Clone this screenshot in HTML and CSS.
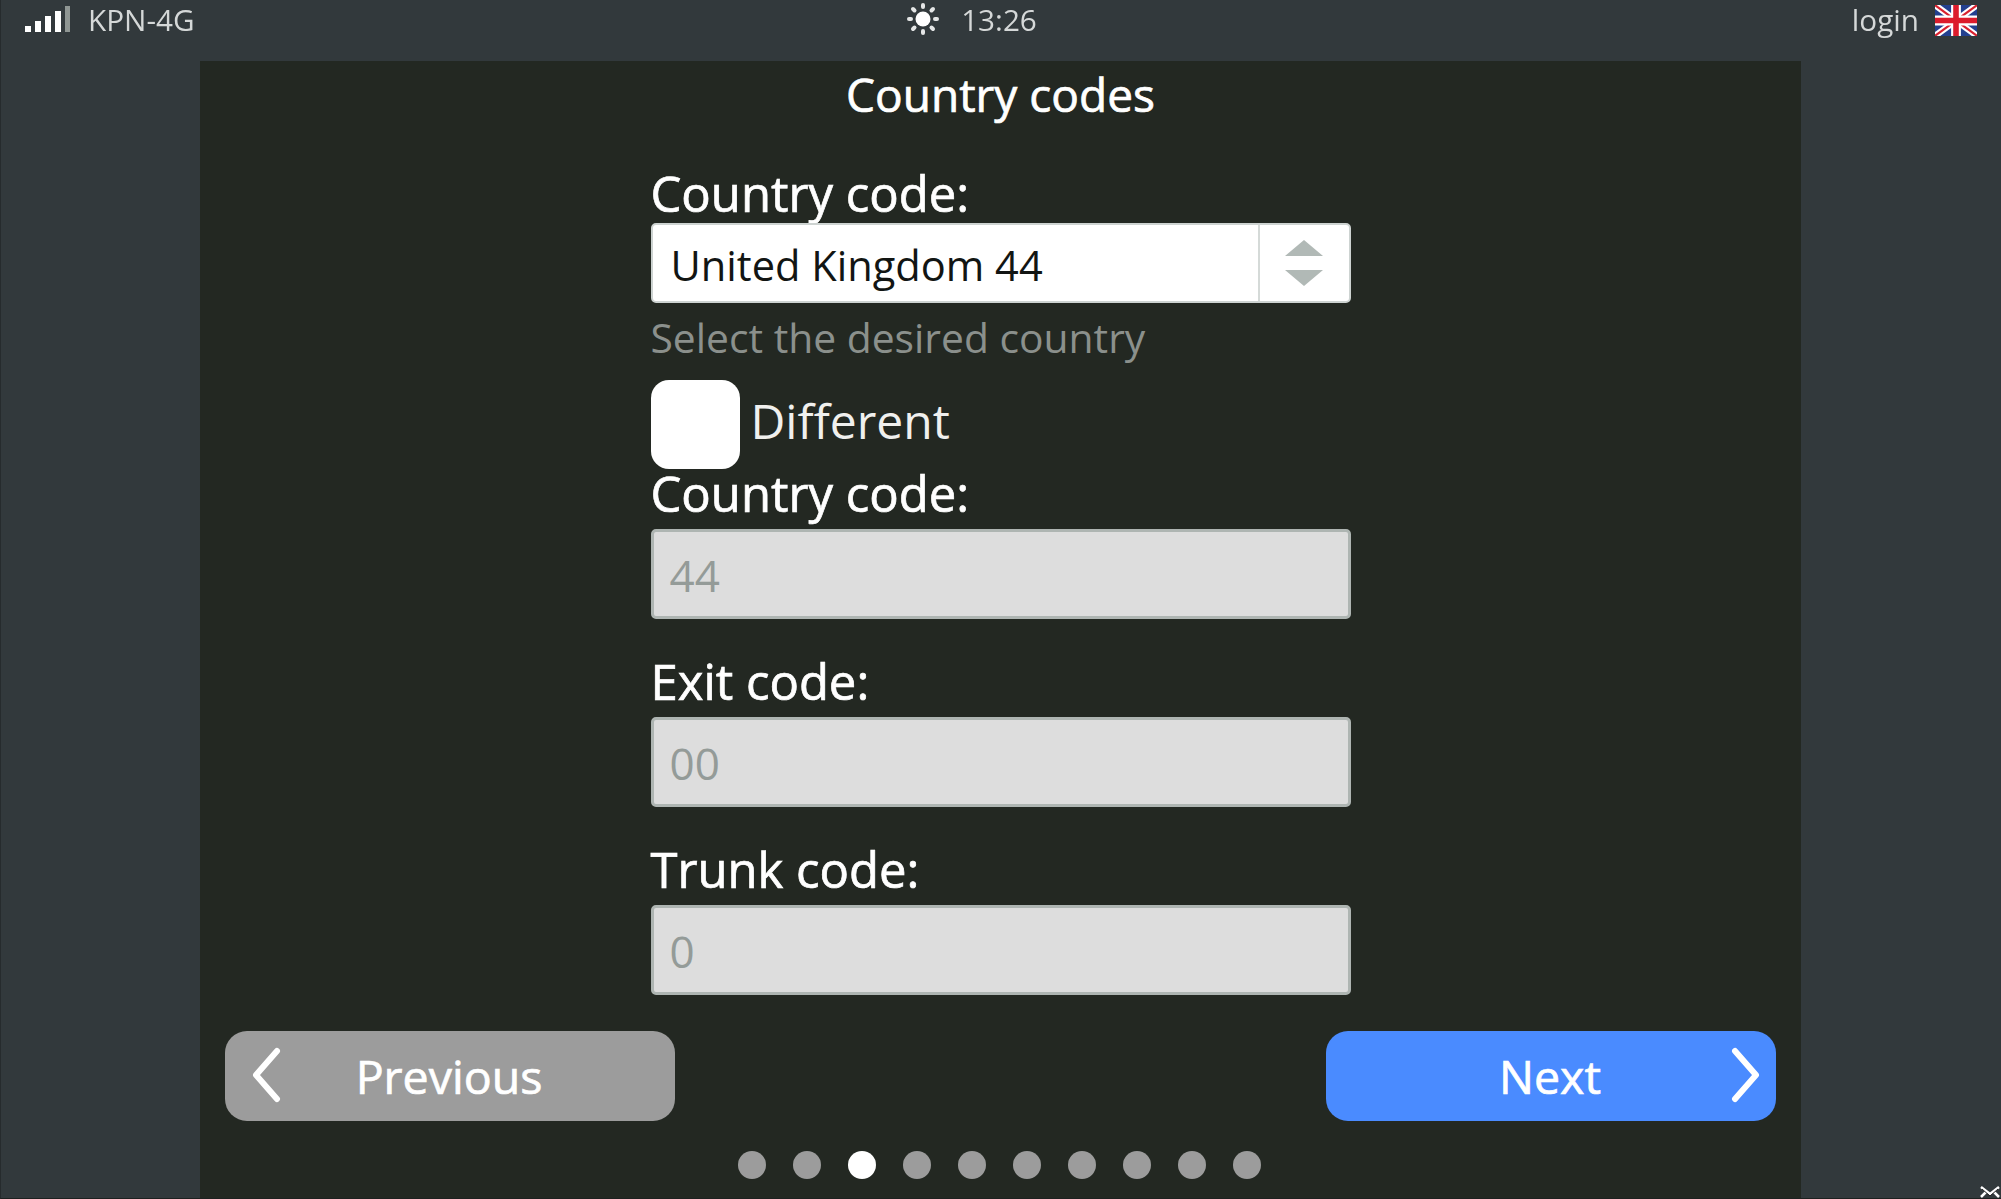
FILE: index.html
```html
<!DOCTYPE html>
<html lang="en">
<head>
<meta charset="utf-8">
<title>Country codes</title>
<link rel="stylesheet" href="styles.css">
</head>
<body>
<div class="screen">
  <header class="statusbar">
    <div class="status-left">
      <svg class="signal" width="46" height="26" viewBox="0 0 46 26"><rect x="0" y="20" width="6" height="6" fill="#fff"/><rect x="10" y="15" width="6" height="11" fill="#fff"/><rect x="20" y="10" width="6" height="16" fill="#fff"/><rect x="30" y="5" width="6" height="21" fill="#fff"/><rect x="40" y="0" width="5" height="26" fill="#8f9693"/></svg>
      <span>KPN-4G</span>
    </div>
    <div class="status-center">
      <svg class="sun" width="32" height="32" viewBox="0 0 32 32"><circle cx="16" cy="16" r="7.5" fill="#fff"/><g stroke="#e4e6e6" stroke-width="4" stroke-linecap="round"><path d="M16 2v2"/><path d="M16 28v2"/><path d="M2 16h2"/><path d="M28 16h2"/><path d="M6 6l1.5 1.5"/><path d="M24.500 24.500L26 26"/><path d="M6 26l1.500-1.500"/><path d="M24.500 7.500L26 6"/></g></svg>
      <span>13:26</span>
    </div>
    <div class="status-right">
      <span>login</span>
      <svg class="flag" width="42" height="31" viewBox="0 0 60 44"><rect width="60" height="44" rx="3" fill="#23408f"/><path d="M0 0L60 44M60 0L0 44" stroke="#fff" stroke-width="9"/><path d="M0 0L60 44M60 0L0 44" stroke="#d8212f" stroke-width="3"/><path d="M30 0V44M0 22H60" stroke="#fff" stroke-width="14"/><path d="M30 0V44M0 22H60" stroke="#dc1c2c" stroke-width="8"/></svg>
    </div>
  </header>

  <main class="panel">
    <h1 class="title">Country codes</h1>
    <form class="form">
      <label class="label label-first">Country code:</label>
      <div class="select">
        <span class="select-value">United Kingdom 44</span>
        <span class="select-arrows">
          <svg width="38" height="46" viewBox="0 0 38 46"><path d="M19 0L38 16H0Z" fill="#b1b9b6"/><path d="M0 30H38L19 46Z" fill="#b1b9b6"/></svg>
        </span>
      </div>
      <p class="hint">Select the desired country</p>
      <div class="check-row">
        <span class="checkbox"></span>
        <span class="check-label">Different</span>
      </div>
      <label class="label label-tight">Country code:</label>
      <div class="input">44</div>
      <label class="label">Exit code:</label>
      <div class="input">00</div>
      <label class="label">Trunk code:</label>
      <div class="input">0</div>
    </form>
    <div class="nav">
      <button class="btn btn-prev" type="button">
        <svg class="chev chev-left" width="30" height="56" viewBox="0 0 30 56"><path d="M26 4L5 28L26 52" fill="none" stroke="#fff" stroke-width="6" stroke-linecap="round" stroke-linejoin="round"/></svg>
        Previous
      </button>
      <button class="btn btn-next" type="button">
        Next
        <svg class="chev chev-right" width="30" height="56" viewBox="0 0 30 56"><path d="M4 4L25 28L4 52" fill="none" stroke="#fff" stroke-width="6" stroke-linecap="round" stroke-linejoin="round"/></svg>
      </button>
    </div>
    <div class="dots">
      <span class="dot"></span><span class="dot"></span><span class="dot dot-on"></span><span class="dot"></span><span class="dot"></span><span class="dot"></span><span class="dot"></span><span class="dot"></span><span class="dot"></span><span class="dot"></span>
    </div>
  </main>

  <svg class="cursor" width="21" height="12" viewBox="0 0 21 12"><path d="M1 1L10 8L19 1M1 11L6 6M19 11L14 6" fill="none" stroke="#fff" stroke-width="2.500"/><path d="M2 3L10 10L18 3" fill="none" stroke="#222" stroke-width="1"/></svg>
</div>
</body>
</html>
```
FILE: styles.css
```css
* { box-sizing: border-box; }
html, body { margin: 0; padding: 0; }
body {
  width: 2001px;
  height: 1199px;
  overflow: hidden;
  background: #32393c;
  font-family: "Open Sans", "Noto Sans", sans-serif;
  color: #fff;
}
.screen {
  position: relative;
  width: 2001px;
  height: 1199px;
  display: flex;
  flex-direction: column;
  background: #32393c;
  border-left: 1px solid #262b2d;
  border-bottom: 1px solid #1d2120;
  filter: blur(0.5px);
}
.statusbar {
  height: 61px;
  flex: none;
  display: grid;
  grid-template-columns: 1fr auto 1fr;
  align-items: start;
  padding: 4px 24px 0 24px;
  font-size: 29.7px;
  line-height: 32px;
  color: #d5d8d8;
}
.status-left { display: flex; align-items: flex-end; gap: 17px; height: 32px; }
.signal { margin-bottom: 4px; }
.status-center { display: flex; align-items: center; gap: 22px; padding-right: 58px; }
.sun { margin-top: -2px; }
.status-right { display: flex; justify-content: flex-end; align-items: center; gap: 16px; }
.panel {
  width: 1601px;
  height: 1137px;
  margin-left: 199px;
  background: #232822;
  display: flex;
  flex-direction: column;
  align-items: center;
}
.title {
  margin: 0;
  height: 68px;
  font-size: 46px;
  font-weight: 500;
  -webkit-text-stroke: 0.7px #fff;
  line-height: 66px;
  text-align: center;
}
.form {
  width: 700px;
  display: flex;
  flex-direction: column;
}
.label {
  display: flex;
  align-items: flex-end;
  height: 98px;
  padding-bottom: 6px;
  font-size: 49px;
  font-weight: 500;
  -webkit-text-stroke: 0.7px #fff;
  line-height: 60px;
}
.label-first { height: 94px; padding-bottom: 0; }
.label-tight { height: 60px; }
.select {
  height: 80px;
  display: flex;
  background: #fff;
  border: 2px solid #cdd3d1;
  border-radius: 5px;
  color: #121513;
  font-size: 41.6px;
}
.select-value { flex: 1; padding-left: 18px; line-height: 81px; }
.select-arrows {
  width: 91px;
  border-left: 2px solid #d5dad8;
  display: flex;
  align-items: center;
  justify-content: center;
}
.hint {
  margin: 0;
  height: 76px;
  font-size: 40.8px;
  line-height: 69px;
  color: #8b908c;
}
.check-row { height: 90px; display: flex; align-items: center; gap: 11px; }
.checkbox { width: 89px; height: 89px; background: #fff; border-radius: 18px; }
.check-label { font-size: 48px; line-height: 60px; margin-top: -6px; color: #f0f0ee; }
.input {
  height: 90px;
  background: #dddddd;
  border: 3px solid #aeb5b2;
  border-radius: 5px;
  color: #949b98;
  font-size: 44px;
  line-height: 86px;
  padding-left: 16px;
}
.nav {
  width: 1551px;
  margin-top: 36px;
  display: flex;
  justify-content: space-between;
}
.btn {
  position: relative;
  width: 450px;
  height: 90px;
  border: 0;
  border-radius: 22px;
  color: #fff;
  font-family: inherit;
  font-size: 46.5px;
  font-weight: 500;
  -webkit-text-stroke: 0.7px #fff;
  padding: 0 2px 0 0;
  line-height: 90px;
}
.btn-prev { background: #9c9c9c; }
.btn-next { background: #4a8bff; }
.chev { position: absolute; top: 16px; }
.chev-left { left: 26px; }
.chev-right { right: 15px; }
.dots {
  margin-top: 30px;
  margin-right: 2px;
  display: flex;
  gap: 27px;
}
.dot { width: 28px; height: 28px; border-radius: 50%; background: #9c9c9c; }
.dot-on { background: #fff; }
.cursor { position: absolute; right: 0; bottom: 0; }
```
